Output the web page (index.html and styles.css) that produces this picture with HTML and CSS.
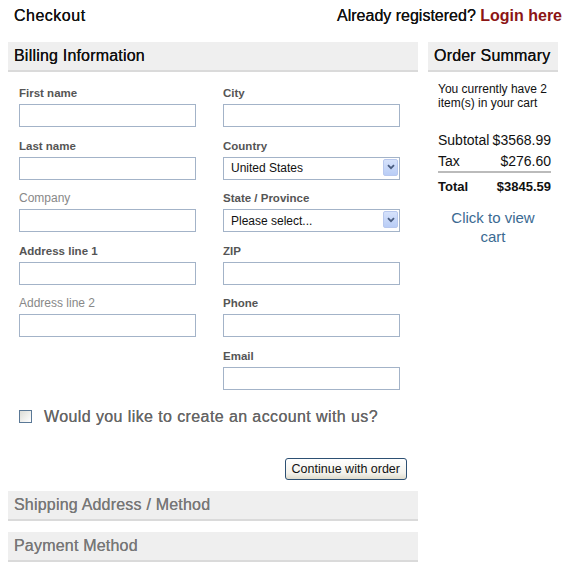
FILE: index.html
```html
<!DOCTYPE html>
<html lang="en">
<head>
  <meta charset="UTF-8" />
  <title>Checkout</title>
  <link rel="stylesheet" href="styles.css">
</head>
<body>

  <div class="page">
    <header>
      <span class="judul">Checkout</span>
      <span class="login">Already registered? <a href="#">Login here</a></span>
    </header>

    <div class="kolom">
      <div class="utama">
        <h2 class="bar">Billing Information</h2>

        <form class="billing" onsubmit="return false">
          <div class="grid">
            <div class="sisi">
              <div class="field">
                <label>First name</label>
                <input type="text">
              </div>
              <div class="field">
                <label>Last name</label>
                <input type="text">
              </div>
              <div class="field opsional">
                <label>Company</label>
                <input type="text">
              </div>
              <div class="field">
                <label>Address line 1</label>
                <input type="text">
              </div>
              <div class="field opsional">
                <label>Address line 2</label>
                <input type="text">
              </div>
            </div>

            <div class="sisi">
              <div class="field">
                <label>City</label>
                <input type="text">
              </div>
              <div class="field">
                <label>Country</label>
                <div class="pilih">
                  <select>
                    <option>United States</option>
                  </select>
                  <span class="panah">
                    <svg width="8" height="6" viewBox="0 0 8 6"><path d="M1 1.2 L4 4.2 L7 1.2" fill="none" stroke="#4a5d80" stroke-width="1.8"/></svg>
                  </span>
                </div>
              </div>
              <div class="field">
                <label>State / Province</label>
                <div class="pilih">
                  <select>
                    <option>Please select...</option>
                  </select>
                  <span class="panah">
                    <svg width="8" height="6" viewBox="0 0 8 6"><path d="M1 1.2 L4 4.2 L7 1.2" fill="none" stroke="#4a5d80" stroke-width="1.8"/></svg>
                  </span>
                </div>
              </div>
              <div class="field">
                <label>ZIP</label>
                <input type="text">
              </div>
              <div class="field">
                <label>Phone</label>
                <input type="text">
              </div>
              <div class="field">
                <label>Email</label>
                <input type="text">
              </div>
            </div>
          </div>

          <label class="akun">
            <span class="kotak"></span>
            Would you like to create an account with us?
          </label>

          <div class="aksi">
            <button type="submit">Continue with order</button>
          </div>
        </form>

        <h2 class="bar redup">Shipping Address / Method</h2>
        <h2 class="bar redup">Payment Method</h2>
      </div>

      <aside class="ringkasan">
        <h2 class="bar">Order Summary</h2>
        <div class="isi">
          <p class="info">You currently have 2 item(s) in your cart</p>
          <table>
            <tr><td>Subtotal</td><td class="angka">$3568.99</td></tr>
            <tr class="pajak"><td>Tax</td><td class="angka">$276.60</td></tr>
            <tr class="total"><td>Total</td><td class="angka">$3845.59</td></tr>
          </table>
          <a href="#" class="lihat">Click to view cart</a>
        </div>
      </aside>
    </div>
  </div>

</body>
</html>
```

FILE: styles.css
```css
body {
  font-family: 'Liberation Sans', Arial, sans-serif;
  background: #fff;
  color: #111;
  margin: 8px;
}

.page {
  width: 554px;
}

header {
  display: flex;
  justify-content: space-between;
  align-items: center;
  height: 16px;
  line-height: 16px;
  margin-bottom: 18px;
}

.judul {
  padding-left: 6px;
  font-size: 16px;
  letter-spacing: 0.5px;
  text-shadow: 0 0 0.4px #111;
}

.login {
  font-size: 16px;
  text-shadow: 0 0 0.4px #111;
}

.login a {
  color: #8c1515;
  font-weight: bold;
  text-decoration: none;
  text-shadow: none;
}

.kolom {
  display: flex;
  gap: 10px;
}

.utama {
  width: 410px;
}

.ringkasan {
  width: 130px;
}

.bar {
  margin: 0;
  background: #efefef;
  border-bottom: 2px solid #dadada;
  height: 28px;
  line-height: 28px;
  padding-left: 6px;
  font-size: 16px;
  font-weight: normal;
  color: #111;
  letter-spacing: 0.2px;
  text-shadow: 0 0 0.4px currentColor;
}

.bar.redup {
  color: #777;
  margin-top: 11px;
}

.billing {
  padding: 14px 11px 0 11px;
}

.grid {
  display: flex;
  gap: 26px;
}

.sisi {
  width: 178px;
}

.field {
  margin-bottom: 11.6px;
}

.field label {
  display: block;
  font-size: 11.5px;
  font-weight: bold;
  line-height: 14px;
  color: #555;
  margin-bottom: 4px;
}

.field.opsional label {
  font-weight: normal;
  font-size: 12px;
  color: #888;
}

.field input,
.field select {
  box-sizing: border-box;
  width: 177px;
  height: 23px;
  border: 1px solid #a3b3c8;
  margin: 0;
  font-family: inherit;
  font-size: 12px;
  background: #fff;
}

.pilih {
  position: relative;
  width: 177px;
}

.pilih select {
  appearance: none;
  -webkit-appearance: none;
  padding: 0 0 0 7px;
  color: #111;
  border-radius: 0;
}

.panah {
  position: absolute;
  right: 2px;
  top: 2px;
  width: 15px;
  height: 17px;
  box-sizing: border-box;
  border: 1px solid #b8c8ee;
  background: linear-gradient(#d6e2fb, #b9cdf6);
  border-radius: 2px;
  display: flex;
  align-items: center;
  justify-content: center;
  pointer-events: none;
}

.akun {
  display: flex;
  align-items: center;
  gap: 12px;
  margin-top: 5px;
  height: 20px;
  font-size: 16px;
  color: #666;
  letter-spacing: 0.4px;
  text-shadow: 0 0 0.4px #666;
}

.kotak {
  width: 11px;
  height: 11px;
  border: 1px solid #5a7896;
  background: linear-gradient(135deg, #dcdcd6, #fff);
}

.aksi {
  display: flex;
  justify-content: flex-end;
  margin-top: 31px;
}

.aksi button {
  height: 22px;
  padding: 0 6px;
  font-family: inherit;
  font-size: 12.5px;
  color: #111;
  border: 1px solid #2d5073;
  border-radius: 3px;
  background: linear-gradient(#ffffff, #f3f2ec 70%, #dedbcc);
  cursor: pointer;
}

.isi {
  padding: 10px 7px 0 10px;
}

.info {
  margin: 0;
  font-size: 12px;
  line-height: 14px;
  color: #111;
}

table {
  width: 100%;
  border-collapse: collapse;
  margin-top: 20px;
  font-size: 14px;
}

td {
  padding: 0;
  height: 20px;
}

.angka {
  text-align: right;
}

.pajak td {
  height: 21px;
  border-bottom: 2px solid #bbb;
}

.total td {
  font-weight: bold;
  font-size: 13px;
  height: 26px;
}

.lihat {
  display: block;
  margin-top: 9px;
  text-align: center;
  font-size: 15px;
  line-height: 19px;
  color: #3b6a92;
  text-decoration: none;
  padding-right: 3px;
}
```
